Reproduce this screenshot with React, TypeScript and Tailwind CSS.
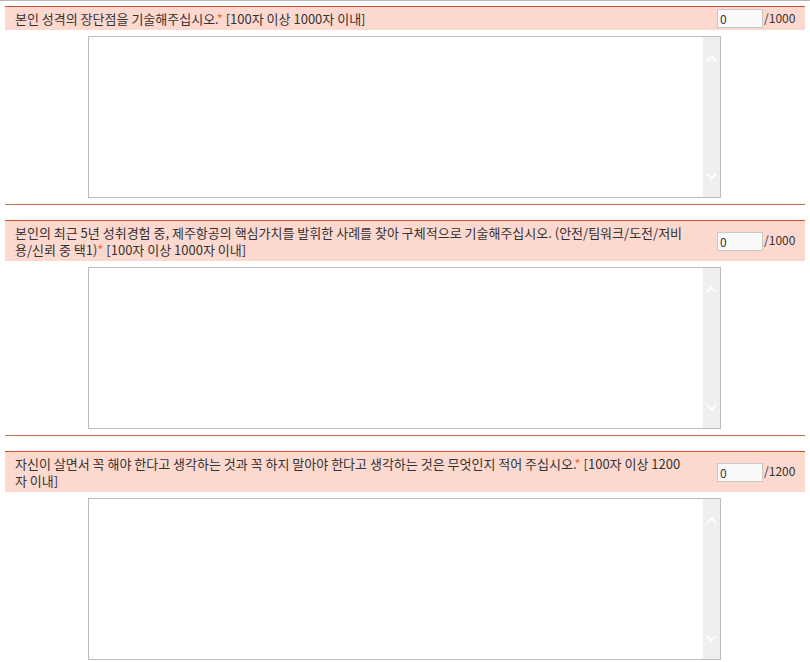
import React from "react"

interface Question {
  id: number
  lines: string[]
  suffixAfterStar: string
  limit: number
}

const questions: Question[] = [
  {
    id: 1,
    lines: ["본인 성격의 장단점을 기술해주십시오."],
    suffixAfterStar: " [100자 이상 1000자 이내]",
    limit: 1000,
  },
  {
    id: 2,
    lines: [
      "본인의 최근 5년 성취경험 중, 제주항공의 핵심가치를 발휘한 사례를 찾아 구체적으로 기술해주십시오. (안전/팀워크/도전/저비",
      "용/신뢰 중 택1)",
    ],
    suffixAfterStar: " [100자 이상 1000자 이내]",
    limit: 1000,
  },
  {
    id: 3,
    lines: [
      "자신이 살면서 꼭 해야 한다고 생각하는 것과 꼭 하지 말아야 한다고 생각하는 것은 무엇인지 적어 주십시오.",
    ],
    suffixAfterStar: " [100자 이상 1200",
    limit: 1200,
  },
]

function Chevron({ up }: { up?: boolean }) {
  return (
    <svg width="11" height="7" viewBox="0 0 11 7" className="block">
      <path
        d={up ? "M1 6 L5.5 1.5 L10 6" : "M1 1 L5.5 5.5 L10 1"}
        fill="none"
        stroke="#ffffff"
        strokeWidth="2"
      />
    </svg>
  )
}

function AnswerBox() {
  return (
    <div className="ml-[83px] mt-[6px] flex h-[162px] w-[633px] border border-[#bdbdbd] bg-white">
      <textarea className="h-full flex-1 resize-none overflow-hidden bg-white p-1 text-[12px] outline-none" />
      <div className="flex h-full w-[17px] flex-col items-center justify-between bg-[#efefef] pb-[17px] pt-[18px]">
        <Chevron up />
        <Chevron />
      </div>
    </div>
  )
}

function QuestionBlock({ q, first }: { q: Question; first?: boolean }) {
  const lastLine = q.lines[q.lines.length - 1]
  return (
    <div className={first ? "" : "mt-[15px]"}>
      <div className="flex items-center border-t border-[#d0502d] bg-[#fcd8ce] py-[3px] text-[13px] leading-[17px] text-[#333333]">
        <div className="flex-1 whitespace-nowrap pl-[10px]">
          {q.lines.slice(0, -1).map((line) => (
            <div key={line}>{line}</div>
          ))}
          <div>
            {lastLine}
            <span className="text-[#f26b1d]">*</span>
            {q.suffixAfterStar}
          </div>
          {q.id === 3 && <div>자 이내]</div>}
        </div>
        <div className="flex h-[16px] w-[88px] shrink-0 items-center">
          <input
            readOnly
            value="0"
            className="h-[19px] w-[46px] shrink-0 border border-[#c8c8c8] bg-[#fafafa] px-[2px] text-[12px] text-[#333333] outline-none"
          />
          <span className="-mt-[3px] ml-[1px] text-[12px]">/{q.limit}</span>
        </div>
      </div>
      <AnswerBox />
      <div className="mt-[6px] h-px bg-[#c5714f]" />
    </div>
  )
}

export default function App() {
  return (
    <div
      className="min-h-[662px] w-[810px] bg-white"
      style={{ fontFamily: '"Noto Sans CJK KR", "Noto Sans", sans-serif' }}
    >
      <div className="h-px bg-[#b8b8b8]" />
      <div className="mx-[5px] mt-[5px] w-[800px]">
        {questions.map((q, i) => (
          <QuestionBlock key={q.id} q={q} first={i === 0} />
        ))}
      </div>
    </div>
  )
}
